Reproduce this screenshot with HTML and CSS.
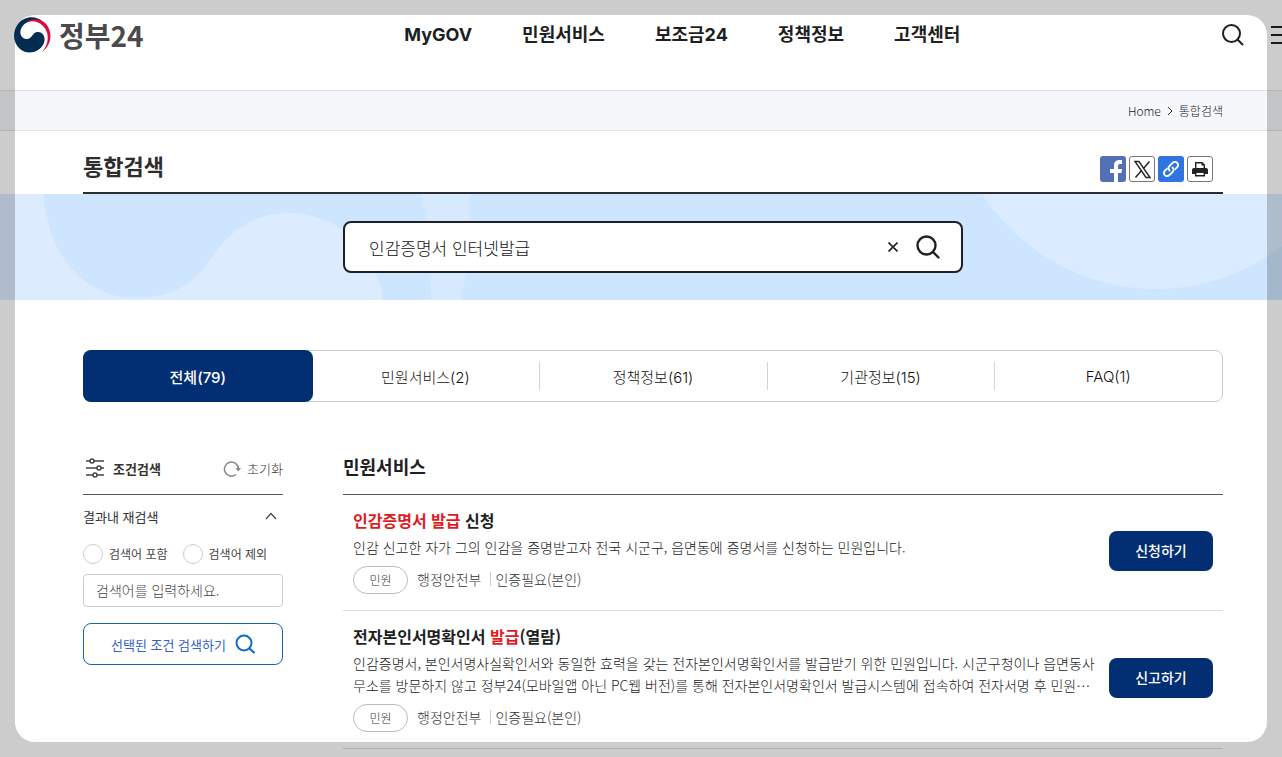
FILE: index.html
```html
<!DOCTYPE html>
<html lang="ko">
<head>
  <meta charset="UTF-8">
  <meta name="viewport" content="width=device-width, initial-scale=1.0">
  <title>통합검색 | 정부24</title>
  <link rel="stylesheet" href="styles.css">
</head>
<body>

<div class="page">
  <header class="header">
    <a class="logo" href="#">
      <svg width="38" height="38" viewBox="0 0 38 38" aria-hidden="true">
        <circle cx="18.5" cy="19" r="18.5" fill="#fff"/>
        <path d="M29 6C22-1 10 0 4 8C-2 16-1 27 6 33C13 39 24 37 29 29C33 22 29 15 23 16C18 17 18 23 13 23C8 23 5 18 7 13C10 5 21 2 29 6Z" fill="#032c52"/>
        <path d="M9 9C17 0 31 2 35 13C39 23 34 32 28 36C35 28 36 17 29 10C23 4 15 4 9 9Z" fill="#d80b3b"/>
      </svg>
      <span>정부24</span>
    </a>
    <nav class="gnb">
      <a href="#">MyGOV</a>
      <a href="#">민원서비스</a>
      <a href="#">보조금24</a>
      <a href="#">정책정보</a>
      <a href="#">고객센터</a>
    </nav>
    <div class="header-tools">
      <button type="button" aria-label="검색">
        <svg width="24" height="24" viewBox="0 0 24 24" fill="none" stroke="#1d1f23" stroke-width="2"><circle cx="10.500" cy="10.500" r="8.500"/><path d="M16.500 16.500L22 22"/></svg>
      </button>
      <button type="button" aria-label="전체메뉴">
        <svg width="22" height="24" viewBox="0 0 22 24" stroke="#1d1f23" stroke-width="2"><path d="M0 4H22M0 12H22M0 20H22"/></svg>
      </button>
    </div>
  </header>

  <div class="crumb-bar">
    <div class="container crumbs">
      <a href="#">Home</a>
      <svg width="6" height="10" viewBox="0 0 6 10" fill="none" stroke="#333" aria-hidden="true"><path d="M1 1L5 5L1 9"/></svg>
      <span>통합검색</span>
    </div>
  </div>

  <div class="container title-row">
    <h1>통합검색</h1>
    <div class="share">
      <button type="button" class="share-fb" aria-label="페이스북">
        <svg width="26" height="26" viewBox="0 0 26 26"><path d="M14 26V17H10V13H14V10C14 6 16 4 19.500 4H22V8H20C18.600 8 18 8.700 18 10V13H22L21.500 17H18V26Z" fill="#fff"/></svg>
      </button>
      <button type="button" class="share-line" aria-label="X">
        <svg width="24" height="24" viewBox="0 0 24 24" fill="none" stroke="#222"><path d="M5 4.500H9L20 20.500H16ZM19.500 4.500L13.500 11.500M11.500 13.500L5.500 20.500" stroke-width="1.400"/></svg>
      </button>
      <button type="button" class="share-link" aria-label="링크 복사">
        <svg width="26" height="26" viewBox="0 0 26 26" fill="none" stroke="#fff" stroke-width="1.800" stroke-linecap="round"><path d="M11.500 14.500C10 13 10.200 11.200 11.500 9.900L14.500 7C16 5.600 18 5.600 19.200 6.900C20.500 8.200 20.400 10 19 11.400L17.200 13.200"/><path d="M14.500 11.500C16 13 15.800 14.800 14.500 16.100L11.500 19C10 20.400 8 20.400 6.800 19.100C5.500 17.800 5.600 16 7 14.600L8.800 12.800"/></svg>
      </button>
      <button type="button" class="share-line" aria-label="인쇄">
        <svg width="24" height="24" viewBox="0 0 24 24"><path d="M7.700 11V5.700H14L16.300 8V11" fill="#fff" stroke="#222" stroke-width="1.400"/><path d="M13.500 5V8.500H17Z" fill="#222"/><path d="M6 11H18Q20 11 20 13V17H4V13Q4 11 6 11Z" fill="#222"/><path d="M7.700 15.200H16.300V18.800H7.700Z" fill="#fff" stroke="#222" stroke-width="1.400"/></svg>
      </button>
    </div>
  </div>

  <div class="banner">
    <svg class="banner-bg" viewBox="0 0 1306 106" preserveAspectRatio="xMidYMid slice" aria-hidden="true">
      <path d="M0 0H44C46 60 85 104 136 104C175 104 195 88 213 62C235 30 260 19 290 19C340 19 378 60 383 106H0Z" fill="#ddebfe"/>
      <path d="M421 0H470Q470 60 461 106H431Q432 45 421 0Z" fill="#d7e9fe"/>
      <circle cx="1156" cy="-112" r="207" fill="#daebff"/>
    </svg>
    <form class="search-box">
      <input type="text" value="인감증명서 인터넷발급" aria-label="검색어">
      <button type="button" aria-label="지우기">
        <svg width="10" height="10" viewBox="0 0 10 10" stroke="#222" stroke-width="1.600"><path d="M0.500 0.500L9.500 9.500M9.500 0.500L0.500 9.500"/></svg>
      </button>
      <button type="button" aria-label="검색">
        <svg width="26" height="26" viewBox="0 0 26 26" fill="none" stroke="#222" stroke-width="2.400" stroke-linecap="round"><circle cx="11.500" cy="11.500" r="9"/><path d="M18 18L23.500 23.500"/></svg>
      </button>
    </form>
  </div>

  <div class="container">
    <nav class="tabs">
      <a class="tab active" href="#">전체(79)</a>
      <a class="tab" href="#">민원서비스(2)</a>
      <a class="tab" href="#">정책정보(61)</a>
      <a class="tab" href="#">기관정보(15)</a>
      <a class="tab" href="#">FAQ(1)</a>
    </nav>

    <div class="columns">
      <!-- 조건검색 -->
      <aside>
        <div class="section-head">
          <h2 class="filter-title">
            <svg width="20" height="20" viewBox="0 0 20 20" fill="#fff" stroke="#444" stroke-width="1.500" aria-hidden="true"><path d="M1 3H19M1 10H19M1 17H19"/><circle cx="7" cy="3" r="2"/><circle cx="14" cy="10" r="2"/><circle cx="10" cy="17" r="2"/></svg>
            조건검색
          </h2>
          <button type="button" class="reset">
            <svg width="18" height="18" viewBox="0 0 18 18" fill="none" stroke="#888" stroke-width="1.500" aria-hidden="true"><path d="M13 15.500A7 7 0 1 1 15.500 10"/><path d="M12.500 9H18L15.300 12.500Z" fill="#888" stroke="none"/></svg>
            초기화
          </button>
        </div>
        <button type="button" class="fold">
          결과내 재검색
          <svg width="12" height="8" viewBox="0 0 12 8" fill="none" stroke="#444" stroke-width="1.200" aria-hidden="true"><path d="M1 7L6 1.500L11 7"/></svg>
        </button>
        <div class="radios">
          <label><input type="radio" name="within"> 검색어 포함</label>
          <label><input type="radio" name="within"> 검색어 제외</label>
        </div>
        <input class="keyword" type="text" placeholder="검색어를 입력하세요." aria-label="결과내 검색어">
        <button type="button" class="filter-btn">
          선택된 조건 검색하기
          <svg width="20" height="20" viewBox="0 0 20 20" fill="none" stroke="#0f6bc9" stroke-width="2" aria-hidden="true"><circle cx="9" cy="9" r="7.500"/><path d="M14.500 14.500L19.500 19"/></svg>
        </button>
      </aside>

      <!-- 검색결과 -->
      <main>
        <div class="section-head">
          <h2 class="result-title">민원서비스</h2>
        </div>
        <article class="result">
          <div class="result-text">
            <h3><em>인감증명서</em> <em>발급</em> 신청</h3>
            <p>인감 신고한 자가 그의 인감을 증명받고자 전국 시군구, 읍면동에 증명서를 신청하는 민원입니다.</p>
            <div class="meta">
              <span class="badge">민원</span>
              <span>행정안전부</span>
              <span class="auth">인증필요(본인)</span>
            </div>
          </div>
          <button type="button" class="apply">신청하기</button>
        </article>
        <article class="result">
          <div class="result-text">
            <h3>전자본인서명확인서 <em>발급</em>(열람)</h3>
            <p>인감증명서, 본인서명사실확인서와 동일한 효력을 갖는 전자본인서명확인서를 발급받기 위한 민원입니다. 시군구청이나 읍면동사무소를 방문하지 않고 정부24(모바일앱 아닌 PC웹 버전)를 통해 전자본인서명확인서 발급시스템에 접속하여 전자서명 후 민원⋯</p>
            <div class="meta">
              <span class="badge">민원</span>
              <span>행정안전부</span>
              <span class="auth">인증필요(본인)</span>
            </div>
          </div>
          <button type="button" class="apply">신고하기</button>
        </article>
      </main>
    </div>
  </div>
</div>

<div class="frame"></div>

</body>
</html>
```

FILE: styles.css
```css
* {box-sizing: border-box;}

body {
  margin: 0;
  height: 100vh;
  overflow: hidden;
  background-color: #fff;
  color: #1d1f23;
  font-family: "Noto Sans CJK KR", sans-serif;
  font-size: 14px;
}

h1, h2, h3, p {margin: 0;}
a {color: inherit; text-decoration: none;}
svg {display: block; flex: none;}
em {font-style: normal; color: #dc1d26;}

button {
  padding: 0;
  border: none;
  background: none;
  color: inherit;
  font-family: inherit;
  cursor: pointer;
}

input {font-family: inherit;}

.page {min-width: 1306px;}
.container {width: 1140px; margin: 0 auto;}

/* Header */
.header {
  display: flex;
  align-items: center;
  justify-content: space-between;
  height: 90px;
  padding: 15px 13px 35px 14px;
}

.logo {
  display: flex;
  align-items: center;
  gap: 7px;
  color: #4a4a4c;
  font-size: 28px;
  font-weight: 700;
  line-height: 38px;
}

.gnb {
  display: flex;
  gap: 50px;
  font-family: Inter, "Noto Sans CJK KR", sans-serif;
  font-size: 18px;
  font-weight: 700;
  line-height: 40px;
}

.header-tools {display: flex; gap: 26px;}

/* Breadcrumb */
.crumb-bar {
  border-top: 1px solid #e1e2e5;
  border-bottom: 1px solid #e1e2e5;
  background-color: #f5f7fb;
}

.crumbs {
  display: flex;
  align-items: center;
  justify-content: flex-end;
  gap: 6px;
  color: #222;
  font-size: 12px;
  font-weight: 300;
  line-height: 39px;
}

.title-row {
  display: flex;
  align-items: flex-start;
  justify-content: space-between;
  height: 63px;
  padding: 18px 10px 0 0;
  border-bottom: 2px solid #2b2d33;
}

.title-row h1 {font-size: 22px; font-weight: 700; line-height: 32px; color: #2d2d2d;}

.share {display: flex; gap: 3px; padding-top: 7px;}
.share button {width: 26px; height: 26px; border-radius: 3px;}
.share-fb {background-color: #5470b5;}
.share-link {background-color: #2f74e0;}
.share .share-line {border: 1px solid #777; background-color: #fff;}

/* Search banner */
.banner {
  position: relative;
  padding: 27px 0;
  background-color: #cde5fe;
}

.banner-bg {
  position: absolute;
  top: 0;
  left: 0;
  width: 100%;
  height: 100%;
}

.search-box {
  position: relative;
  display: flex;
  align-items: center;
  gap: 17px;
  width: 620px;
  height: 52px;
  margin: 0 auto;
  padding: 0 20px 0 24px;
  border: 2px solid #1d2127;
  border-radius: 8px;
  background-color: #fff;
}

.search-box input {
  flex: 1;
  min-width: 0;
  padding: 0;
  border: none;
  outline: none;
  color: #111;
  font-size: 17px;
  font-weight: 300;
}

/* Tabs */
.tabs {
  display: grid;
  grid-template-columns: repeat(5, 1fr);
  height: 52px;
  margin-top: 50px;
  border: 1px solid #ccc;
  border-radius: 8px;
  font-family: Inter, "Noto Sans CJK KR", sans-serif;
  font-size: 15px;
  font-weight: 300;
}

.tab {
  display: flex;
  align-items: center;
  justify-content: center;
  color: #111;
}

.tab + .tab + .tab {background: linear-gradient(#d4d4d4, #d4d4d4) left center / 1px 28px no-repeat;}

.tab.active {
  margin: -1px;
  border-radius: 8px;
  background-color: #022e73;
  color: #fff;
  font-weight: 500;
}

/* Columns */
.columns {
  display: grid;
  grid-template-columns: 200px 1fr;
  gap: 60px;
  margin-top: 40px;
}

.section-head {
  display: flex;
  align-items: center;
  justify-content: space-between;
  height: 53px;
  border-bottom: 1px solid #55565c;
}

.result-title {
  padding-bottom: 4px;
  font-size: 18px;
  font-weight: 700;
}

.filter-title {
  display: flex;
  align-items: center;
  gap: 8px;
  padding-left: 2px;
  color: #333;
  font-size: 13px;
  font-weight: 700;
}

.reset {
  display: flex;
  align-items: center;
  gap: 6px;
  color: #333;
  font-size: 13px;
  font-weight: 300;
}

.fold {
  display: flex;
  align-items: center;
  justify-content: space-between;
  width: 100%;
  height: 44px;
  padding: 0 6px 2px 0;
  color: #333;
  font-size: 13px;
}

.radios {display: flex; gap: 15px; margin-top: 5px;}

.radios label {
  display: flex;
  align-items: center;
  gap: 6px;
  color: #444;
  font-size: 12px;
  line-height: 20px;
}

.radios input {
  appearance: none;
  width: 20px;
  height: 20px;
  margin: 0;
  border: 1px solid #ccc;
  border-radius: 50%;
}

.radios input:checked {border: 6px solid #022e73;}

.keyword {
  width: 100%;
  height: 33px;
  margin-top: 10px;
  padding: 0 12px 2px;
  border: 1px solid #ccc;
  border-radius: 4px;
  font-size: 14px;
  font-weight: 300;
}

.keyword::placeholder {color: #444;}

.filter-btn {
  display: flex;
  align-items: center;
  justify-content: center;
  gap: 9px;
  width: 100%;
  height: 42px;
  margin-top: 16px;
  border: 1px solid #1d62b8;
  border-radius: 8px;
  color: #3560cc;
  font-size: 13px;
}

/* Results */
.result {
  display: flex;
  align-items: center;
  gap: 12px;
  padding: 13px 10px 16px;
  border-bottom: 1px solid #ddd;
}

.result-text {flex: 1;}
.result h3 {font-size: 16px; font-weight: 700; line-height: 24px;}

.result p {
  margin-top: 4px;
  color: #222;
  font-size: 14px;
  font-weight: 300;
  line-height: 22px;
}

.meta {
  display: flex;
  align-items: flex-start;
  gap: 9px;
  margin-top: 8px;
  color: #333;
  font-weight: 300;
  line-height: 26px;
}

.badge {
  width: 55px;
  border: 1px solid #bbb;
  border-radius: 14px;
  font-size: 12px;
  line-height: 26px;
  text-align: center;
}

.auth {
  padding-left: 5px;
  background: linear-gradient(#ccc, #ccc) left center / 1px 14px no-repeat;
}

.apply {
  width: 104px;
  height: 40px;
  padding-bottom: 2px;
  border-radius: 8px;
  background-color: #022e73;
  color: #fff;
  font-size: 14px;
  font-weight: 500;
}

/* Shaded edge around the window */
.frame {
  position: fixed;
  inset: 15px;
  border-radius: 20px;
  box-shadow: 0 0 0 40px rgba(0, 0, 0, 0.2);
  pointer-events: none;
}
```
